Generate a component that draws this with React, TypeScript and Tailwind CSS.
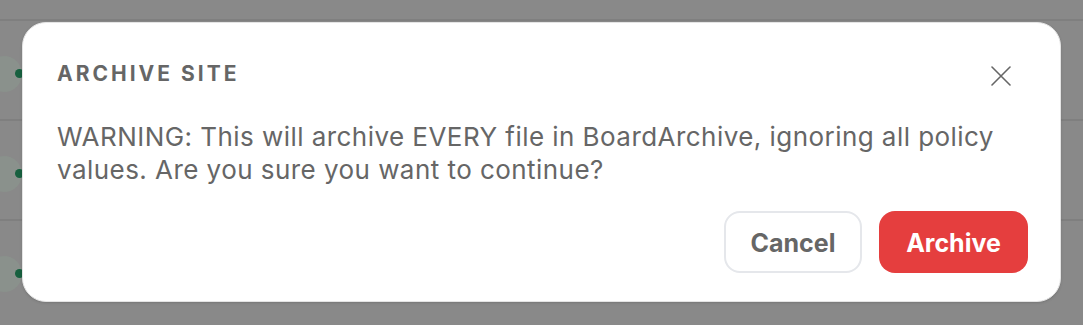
const rows = [0, 1, 2];

export default function App() {
  return (
    <div className="relative w-[1083px] h-[325px] overflow-hidden bg-[#898989] font-['Inter',sans-serif]">
      {/* page behind the overlay */}
      <div className="h-[19px]" />
      {rows.map((r) => (
        <div key={r} className="relative h-[100px] border-t-2 border-[#7f7f7f]">
          <div className="absolute left-[-14px] top-[35px] w-[36px] h-[36px] rounded-full bg-[#8a918c]" />
          <div className="absolute left-[15px] top-[48px] w-[9px] h-[9px] rounded-full bg-[#17603f]" />
        </div>
      ))}

      {/* modal */}
      <div className="absolute left-[22px] top-[22px] w-[1039px] h-[280px] rounded-[24px] bg-white border border-[#e4e4e4] shadow-sm pl-[34px] pr-[32px] pt-[37px]">
        <div className="flex items-start justify-between">
          <h2 className="text-[21px] font-bold tracking-[3px] text-[#666666] leading-[28px]">
            ARCHIVE SITE
          </h2>
          <button className="mr-[17px] mt-[6px] text-[#666666]">
            <svg width="20" height="20" viewBox="0 0 20 20" fill="none" stroke="currentColor" strokeWidth="1.6" strokeLinecap="round">
              <path d="M1 1 L19 19 M19 1 L1 19" />
            </svg>
          </button>
        </div>
        <p className="mt-[32px] text-[26px] leading-[33px] tracking-[0.45px] text-[#666666]">
          WARNING: This will archive EVERY file in BoardArchive, ignoring all policy values. Are you sure you want to continue?
        </p>
        <div className="mt-[25px] flex justify-end gap-[17px]">
          <button className="w-[138px] h-[62px] pt-[3px] rounded-[16px] border-2 border-[#e5e7eb] bg-white text-[25px] font-bold text-[#666666]">
            Cancel
          </button>
          <button className="w-[149px] h-[62px] pt-[3px] rounded-[16px] bg-[#e53e3e] text-[25px] font-bold text-white">
            Archive
          </button>
        </div>
      </div>
    </div>
  );
}
